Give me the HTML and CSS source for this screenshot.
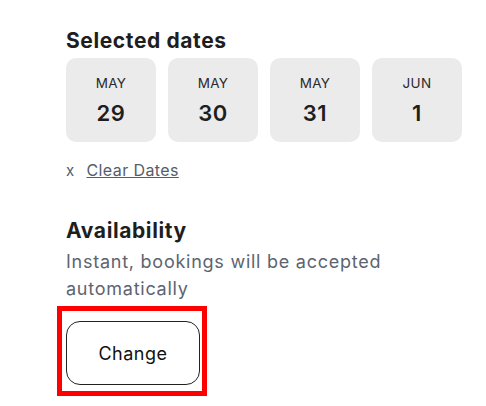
FILE: index.html
```html
<!DOCTYPE html>
<html lang="en">
<head>
    <meta charset="UTF-8">
    <meta name="viewport" content="width=device-width, initial-scale=1.0">
    <title>Dates</title>
    <link rel="stylesheet" href="styles.css">
</head>
<body>
    <div class="panel">
        <h2 class="title">Selected dates</h2>
        <div class="dates">
            <div class="date-card">
                <span class="month">MAY</span>
                <span class="day">29</span>
            </div>
            <div class="date-card">
                <span class="month">MAY</span>
                <span class="day">30</span>
            </div>
            <div class="date-card">
                <span class="month">MAY</span>
                <span class="day">31</span>
            </div>
            <div class="date-card">
                <span class="month">JUN</span>
                <span class="day">1</span>
            </div>
        </div>

        <div class="clear">
            <span class="clear-x">x</span>
            <a class="clear-link" href="#">Clear Dates</a>
        </div>

        <h2 class="title avail-title">Availability</h2>
        <p class="desc">Instant, bookings will be accepted automatically</p>

        <div class="highlight">
            <button class="btn">Change</button>
        </div>
    </div>
</body>
</html>
```

FILE: styles.css
```css
body {
    margin: 0;
    padding: 0;
    font-family: Inter, "Noto Sans", sans-serif;
    background: #fff;
    color: #222;
}
.panel {
    padding: 28px 0 0 66px;
    width: 400px;
}
.title {
    margin: 0;
    font-size: 21px;
    line-height: 26px;
    font-weight: 700;
    letter-spacing: 0.6px;
    color: #1e1e1e;
}
.dates {
    display: flex;
    gap: 12px;
    margin-top: 4px;
}
.date-card {
    width: 90px;
    height: 84px;
    box-sizing: border-box;
    padding-top: 2px;
    background-color: #ebebeb;
    border-radius: 10px;
    display: flex;
    flex-direction: column;
    align-items: center;
    justify-content: center;
}
.month {
    font-size: 13.5px;
    line-height: 16px;
    letter-spacing: 0.3px;
    color: #2a2a2a;
}
.day {
    font-size: 22px;
    line-height: 28px;
    font-weight: 600;
    letter-spacing: 0.5px;
    margin-top: 8px;
    color: #1e1e1e;
}
.clear {
    margin-top: 18px;
    font-size: 16px;
    line-height: 20px;
    letter-spacing: 0.4px;
    color: #555d69;
}
.clear-x {
    font-size: 15px;
    margin-right: 7px;
}
.clear-link {
    color: #555d69;
    text-decoration: underline;
}
.avail-title {
    margin-top: 37px;
}
.desc {
    margin: 4px 0 0 0;
    font-size: 18px;
    line-height: 27px;
    letter-spacing: 0.75px;
    color: #5d6470;
    width: 340px;
}
.highlight {
    display: inline-block;
    margin: 4px 0 0 -9px;
    border: 5px solid #f00;
    padding: 10px 2px 6px 4px;
}
.btn {
    display: block;
    width: 134px;
    height: 64px;
    border: 1px solid #222;
    border-radius: 14px;
    background: #fff;
    font-family: Inter, "Noto Sans", sans-serif;
    font-size: 18px;
    letter-spacing: 0.5px;
    color: #111;
    cursor: pointer;
}
```
